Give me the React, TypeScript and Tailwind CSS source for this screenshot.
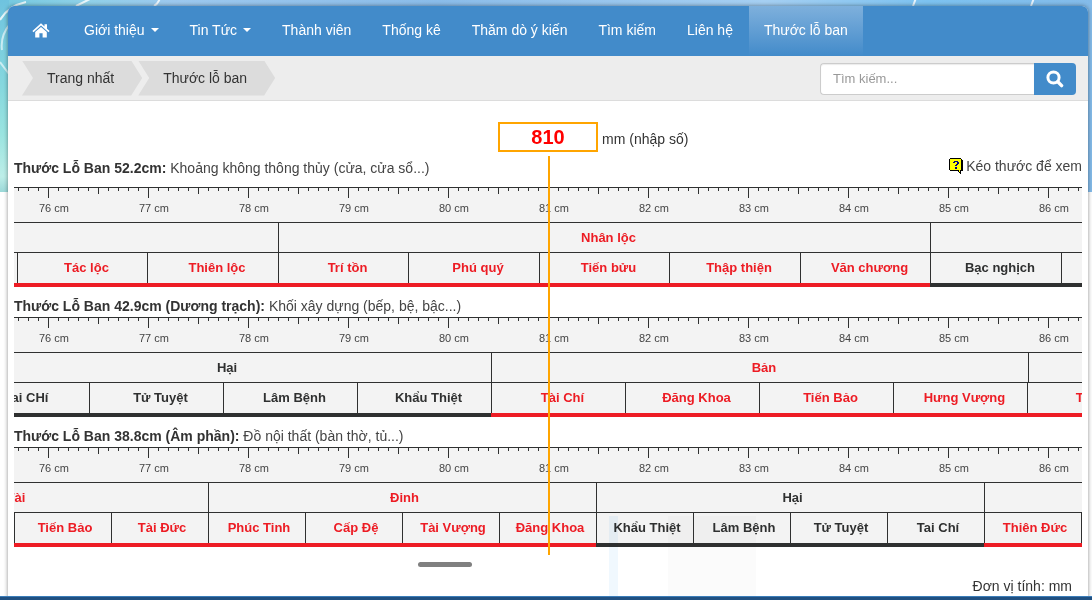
import React, { useState } from "react";

type Tone = "good" | "bad" | "none";
type Cell = { label: string; width: number; tone: Tone };
type Row = { offset: number; cells: Cell[] };
type RulerData = { title: string; use: string; narrow?: boolean; groups: Row; parts: Row };

const good = (label: string, width: number): Cell => ({ label, width, tone: "good" });
const bad = (label: string, width: number): Cell => ({ label, width, tone: "bad" });
const lead = (width: number): Cell => ({ label: "", width, tone: "none" });

const rulers: RulerData[] = [
  {
    title: "Thước Lỗ Ban 52.2cm:",
    use: "Khoảng không thông thủy (cửa, cửa sổ...)",
    groups: { offset: 0, cells: [lead(264), good("Nhân lộc", 652), bad("", 652)] },
    parts: {
      offset: 0,
      cells: [
        good("", 3),
        good("Tác lộc", 130),
        good("Thiên lộc", 131),
        good("Trí tồn", 130),
        good("Phú quý", 131),
        good("Tiến bửu", 130),
        good("Thập thiện", 131),
        good("Văn chương", 130),
        bad("Bạc nghịch", 131),
        bad("", 130),
      ],
    },
  },
  {
    title: "Thước Lỗ Ban 42.9cm (Dương trạch):",
    use: "Khối xây dựng (bếp, bệ, bậc...)",
    groups: { offset: -59, cells: [bad("Hại", 536), good("Bản", 537), bad("", 536)] },
    parts: {
      offset: -59,
      cells: [
        bad("Tai CHí", 134),
        bad("Tử Tuyệt", 134),
        bad("Lâm Bệnh", 134),
        bad("Khẩu Thiệt", 134),
        good("Tài Chí", 134),
        good("Đăng Khoa", 134),
        good("Tiến Bảo", 134),
        good("Hưng Vượng", 134),
        good("Tấn Tài", 134),
      ],
    },
  },
  {
    title: "Thước Lỗ Ban 38.8cm (Âm phần):",
    use: "Đồ nội thất (bàn thờ, tủ...)",
    narrow: true,
    groups: {
      offset: -194,
      cells: [good("Tài", 388), good("Đinh", 388), bad("Hại", 388), good("", 388)],
    },
    parts: {
      offset: 0,
      cells: [
        good("Tiến Bảo", 97),
        good("Tài Đức", 97),
        good("Phúc Tinh", 97),
        good("Cấp Đệ", 97),
        good("Tài Vượng", 97),
        good("Đăng Khoa", 97),
        bad("Khẩu Thiệt", 97),
        bad("Lâm Bệnh", 97),
        bad("Tử Tuyệt", 97),
        bad("Tai Chí", 97),
        good("Thiên Đức", 97),
        good("", 97),
      ],
    },
  },
];

const centimetres = [76, 77, 78, 79, 80, 81, 82, 83, 84, 85, 86];

const menu = [
  { label: "Giới thiệu", drop: true },
  { label: "Tin Tức", drop: true },
  { label: "Thành viên" },
  { label: "Thống kê" },
  { label: "Thăm dò ý kiến" },
  { label: "Tìm kiếm" },
  { label: "Liên hệ" },
];

const text: Record<Tone, string> = {
  good: "text-[#ed1c24]",
  bad: "text-[#2f3030]",
  none: "",
};
const band: Record<Tone, string> = {
  good: "border-b-[#ed1c24]",
  bad: "border-b-[#2f3030]",
  none: "",
};

function HomeIcon() {
  return (
    <svg width="18" height="15" viewBox="0 0 18 15" fill="currentColor" aria-hidden="true">
      <path d="M9 0.3 0.4 8l1.1 1.2L9 2.6l7.5 6.6L17.6 8 15 5.7V1.2h-2.5v2.2Z" />
      <path d="M9 4 3.2 9.1V14.5h4.2v-4.3h3.2v4.3h4.2V9.1Z" />
    </svg>
  );
}

function SearchIcon() {
  return (
    <svg width="18" height="18" viewBox="0 0 18 18" fill="none" stroke="currentColor" aria-hidden="true">
      <circle cx="7.5" cy="7.5" r="5.6" strokeWidth="3" />
      <path d="M11.8 11.8 15.6 15.6" strokeWidth="3.4" strokeLinecap="round" />
    </svg>
  );
}

function HelpIcon() {
  return (
    <svg width="14" height="16" viewBox="0 0 14 16" shapeRendering="crispEdges" aria-hidden="true">
      <path d="M1 0h11v1h1v1h1v11h-2v3h-1v-1h-1v-1H9v-1H1v-1H0V1h1Z" fill="#000" />
      <path d="M1 1h11v11h-1v2h-1v-2H1Z" fill="#ff0" />
      <path d="M5 3h4v1h1v2H9v1H8v1H6V7h1V6h1V4H6v1H4V4h1ZM6 9h2v2H6Z" fill="#000080" />
    </svg>
  );
}

function Ticks() {
  return (
    <svg width="100" height="10" className="block" shapeRendering="crispEdges" fill="#2f3030" aria-hidden="true">
      {[0, 1, 2, 3, 4, 5, 6, 7, 8, 9].map((i) => (
        <rect key={i} x={i * 10} y="0" width="1" height={i === 5 ? 10 : i === 0 ? 6 : 3} />
      ))}
    </svg>
  );
}

function Ruler({ data }: { data: RulerData }) {
  const inset = data.narrow ? "pl-1" : "pl-2";
  return (
    <div className="overflow-hidden border-t border-[#2f3030] bg-[#f3f3f3] text-[13px] font-bold">
      <div className="-ml-4 flex h-[34px]">
        {centimetres.map((cm) => (
          <div key={cm} className="w-[100px] shrink-0">
            <Ticks />
            <div className="pl-3 text-center text-[11px] leading-5 font-normal text-[#444]">{cm} cm</div>
          </div>
        ))}
      </div>
      <div className="border-t border-[#2f3030]">
        <div className="flex h-[29px]" style={{ marginLeft: data.groups.offset }}>
          {data.groups.cells.map((c, i) => (
            <div
              key={i}
              className={`shrink-0 text-center leading-[29px] ${inset} ${i > 0 ? "border-l border-[#2f3030]" : ""} ${text[c.tone]}`}
              style={{ width: c.width }}
            >
              {c.label}
            </div>
          ))}
        </div>
      </div>
      <div className="border-t border-[#2f3030]">
        <div className="flex h-[34px]" style={{ marginLeft: data.parts.offset }}>
          {data.parts.cells.map((c, i) => (
            <div
              key={i}
              className={`shrink-0 border-b-4 text-center leading-[30px] ${band[c.tone]} ${text[c.tone]}`}
              style={{ width: c.width }}
            >
              <div className={`h-full ${c.width > 3 ? `border-l border-[#2f3030] ${inset}` : ""}`}>{c.label}</div>
            </div>
          ))}
        </div>
      </div>
    </div>
  );
}

function Backdrop() {
  return (
    <svg
      className="absolute inset-x-0 top-0 -z-10 h-[192px] w-full"
      viewBox="0 0 1092 192"
      preserveAspectRatio="none"
      aria-hidden="true"
    >
      <defs>
        <linearGradient id="sky" x1="0" x2="1" y1="0" y2="0">
          <stop offset="0" stopColor="#74c9df" />
          <stop offset="0.08" stopColor="#8fd0e8" />
          <stop offset="0.16" stopColor="#9cc8ee" />
          <stop offset="0.4" stopColor="#8abce9" />
          <stop offset="0.7" stopColor="#a5cff2" />
          <stop offset="0.85" stopColor="#7cc2f0" />
          <stop offset="1" stopColor="#84bbe9" />
        </linearGradient>
        <linearGradient id="sea" x1="0" x2="0" y1="0" y2="1">
          <stop offset="0" stopColor="#6fc3df" />
          <stop offset="0.45" stopColor="#86d8de" />
          <stop offset="0.7" stopColor="#9ae4e0" />
          <stop offset="0.92" stopColor="#bdeee8" />
          <stop offset="1" stopColor="#9bd8d8" />
        </linearGradient>
      </defs>
      <rect width="1092" height="192" fill="url(#sky)" />
      <rect width="9" height="192" fill="url(#sea)" />
      <g fill="none" stroke="#fff" strokeOpacity="0.8" strokeWidth="2">
        <path d="M0 20Q8 6 26 2M76 6l16-8M154 6q4-2 6-8M913 6l3-8M1031 6l3-8" />
        <path d="M2 50q-2-14 8-26M0 62l9 12" strokeOpacity="0.6" />
      </g>
    </svg>
  );
}

export default function App() {
  const [value, setValue] = useState("810");
  return (
    <div className="relative isolate flex min-h-screen flex-col overflow-hidden bg-white pt-1.5 pr-1 pl-2 font-['Liberation_Sans',Arial,sans-serif] text-sm leading-5 text-[#333]">
      <Backdrop />
      <div className="flex grow flex-col rounded-t-md bg-white pb-1 shadow-[0_0_4px_rgba(0,0,0,0.45)]">
        <nav className="flex h-[50px] gap-px rounded-t-md bg-[#428bca] pl-2 text-white">
          <a href="#home" aria-label="Trang nhất" className="flex items-center pr-[18px] pb-0.5 pl-4">
            <HomeIcon />
          </a>
          {menu.map((m) => (
            <a key={m.label} href="#menu" className="flex items-center gap-1.5 px-[15px] pb-0.5 whitespace-nowrap">
              {m.label}
              {m.drop && (
                <svg width="8" height="4" viewBox="0 0 8 4" fill="currentColor" aria-hidden="true">
                  <path d="M0 0h8L4 4Z" />
                </svg>
              )}
            </a>
          ))}
          <a
            href="#ruler"
            className="flex items-center bg-linear-to-b from-[#7eb0dc] to-[#428bca] px-[15px] pb-0.5 whitespace-nowrap"
          >
            Thước lỗ ban
          </a>
        </nav>

        <div className="flex h-[45px] items-center justify-between border-b border-[#dcdcdc] bg-[#ededed] pr-3 pl-3.5">
          <div className="flex">
            {["Trang nhất", "Thước lỗ ban"].map((crumb) => (
              <a
                key={crumb}
                href="#crumb"
                className="-mr-1 h-[35px] bg-[#dcdcdc] pr-7 pl-[25px] leading-[34px] [clip-path:polygon(0_0,calc(100%-11px)_0,100%_50%,calc(100%-11px)_100%,0_100%,11px_50%)]"
              >
                {crumb}
              </a>
            ))}
          </div>
          <form className="mt-0.5 flex h-8 w-64" onSubmit={(e) => e.preventDefault()}>
            <input
              type="search"
              aria-label="Tìm kiếm"
              placeholder="Tìm kiếm..."
              className="min-w-0 grow rounded-l border border-r-0 border-[#ccc] bg-white px-3 text-[13px] shadow-[inset_0_1px_1px_rgba(0,0,0,0.08)] outline-none placeholder:text-[#999]"
            />
            <button
              type="submit"
              aria-label="Tìm"
              className="flex w-[42px] items-center justify-center rounded-r bg-[#428bca] text-white"
            >
              <SearchIcon />
            </button>
          </form>
        </div>

        <main className="px-1.5 pt-[21px]">
          <div className="flex gap-1">
            <div className="flex-1" />
            <input
              id="length"
              value={value}
              onChange={(e) => setValue(e.target.value)}
              className="h-[30px] w-[100px] border-2 border-[orange] bg-white text-center text-xl font-bold text-[red] outline-none"
            />
            <label htmlFor="length" className="flex-1 pt-[7px]">
              mm (nhập số)
            </label>
          </div>

          <div className="relative pt-1.5">
            {rulers.map((r, i) => (
              <section key={r.title}>
                <div className={`flex items-start justify-between ${i === 0 ? "pb-[9px]" : "pt-[9px] pb-px"}`}>
                  <h2 className="text-[#444]">
                    <b className="text-[#333]">{r.title}</b> {r.use}
                  </h2>
                  {i === 0 && (
                    <p className="flex items-center gap-[3px] leading-4 text-[#444]">
                      <HelpIcon />
                      Kéo thước để xem
                    </p>
                  )}
                </div>
                <Ruler data={r} />
              </section>
            ))}
            <div className="absolute top-1 -bottom-2 left-1/2 w-0.5 bg-[orange]" />
            <div
              className="pointer-events-none absolute top-[364px] left-[595px] flex h-20 mix-blend-multiply"
              aria-hidden="true"
            >
              <div className="w-[9px] bg-[#f0f8fe]" />
              <div className="w-[50px]" />
              <div className="w-[88px] bg-[#fbfbfb]" />
            </div>
          </div>

          <div className="mt-[15px] mr-[206px] flex justify-center">
            <div className="h-[5px] w-[54px] rounded-full bg-[#808080]" />
          </div>
          <p className="mt-[9px] pr-2.5 text-right">Đơn vị tính: mm</p>
        </main>
      </div>
      <div className="fixed inset-x-0 bottom-0 h-1 border-t border-[#3b7db9] bg-[#205081]" />
    </div>
  );
}
